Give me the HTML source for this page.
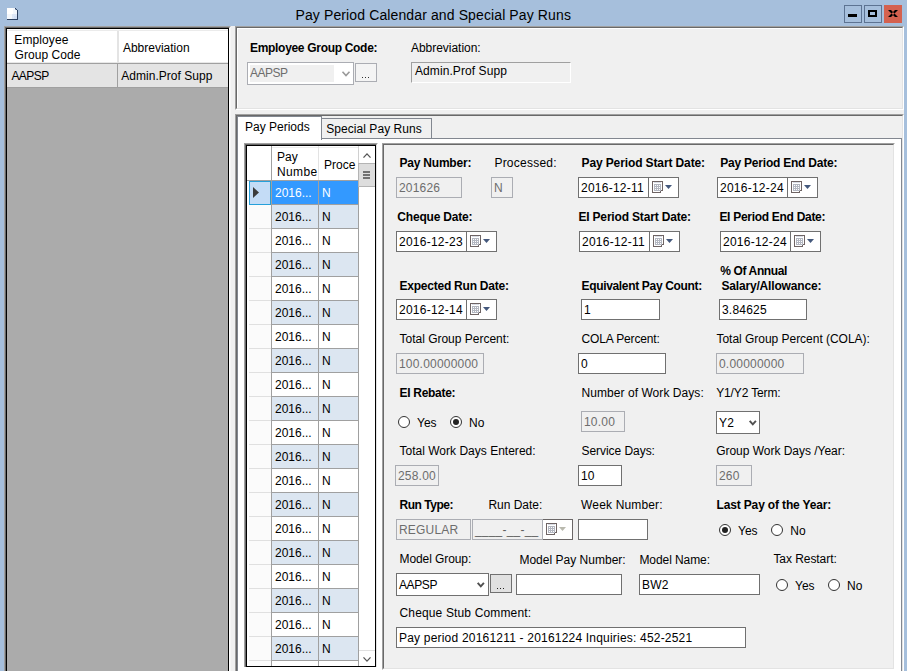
<!DOCTYPE html>
<html><head><meta charset="utf-8"><title>Pay Period Calendar and Special Pay Runs</title>
<style>
html,body{margin:0;padding:0;}
body{width:907px;height:671px;overflow:hidden;background:#a6bfdc;position:relative;font-family:"Liberation Sans",sans-serif;font-size:12px;color:#000;}
div{position:absolute;box-sizing:border-box;}
.t{white-space:nowrap;line-height:14px;}
.tb{background:#fff;border:1px solid #707070;}
.tbd{background:#f0f0f0;border:1px solid #abadb3;}
.in{left:2px;top:3px;white-space:nowrap;line-height:14px;font-size:12px;letter-spacing:0.2px;}
.dis{color:#6d6d6d;}
svg{position:absolute;overflow:visible;}
</style></head>
<body>
<div class="t" style="left:295.5px;top:6px;font-size:14px;color:#000;letter-spacing:0.117px;line-height:18px;">Pay Period Calendar and Special Pay Runs</div>
<svg style="left:7px;top:8px" width="11" height="12" viewBox="0 0 11 12" shape-rendering="crispEdges">
<rect x="0" y="0" width="10" height="11" fill="#f3f7fc"/>
<rect x="0" y="0" width="6" height="6" fill="#ffffff"/>
<rect x="5" y="6" width="5" height="5" fill="#dde7f6"/>
<rect x="7" y="8" width="3" height="3" fill="#d3e0f5"/>
<rect x="0" y="11" width="11" height="1" fill="#2c4060"/>
<rect x="10" y="2" width="1" height="10" fill="#2c4060"/>
<path d="M8 0 H10 V2 Z" fill="#a6bfdc"/>
<rect x="8" y="0" width="1" height="1" fill="#2c4060"/>
<rect x="9" y="1" width="1" height="1" fill="#2c4060"/>
<rect x="8" y="1" width="1" height="1" fill="#8fa3c0"/>
</svg>
<div class="" style="left:844px;top:5px;width:18px;height:18px;border:1px solid #5d7392;background:#a6bfdc;"><div style="left:3px;top:8px;width:9px;height:3px;background:#000"></div></div>
<div class="" style="left:864px;top:5px;width:18px;height:18px;border:1px solid #5d7392;background:#a6bfdc;"><div style="left:3px;top:4px;width:9px;height:7px;border:2px solid #000;"></div></div>
<div class="" style="left:884px;top:5px;width:18px;height:18px;background:#d4614f;"><svg style="left:4px;top:5px" width="10" height="7" viewBox="0 0 10 7"><path d="M0 0 H3 L10 7 H7 Z M10 0 H7 L0 7 H3 Z" fill="#000"/></svg></div>
<div class="" style="left:4px;top:26px;width:900px;height:645px;background:#f0f0f0;"></div>
<div class="" style="left:4px;top:26px;width:227px;height:645px;background:#ababab;border-top:1px solid #a0a0a0;border-left:1px solid #a0a0a0;border-right:1px solid #f6f6f6;"></div>
<div class="" style="left:5px;top:27px;width:225px;height:645px;border-top:1px solid #696969;border-left:1px solid #696969;border-right:1px solid #fff;"></div>
<div class="" style="left:6px;top:28px;width:223px;height:645px;border:1px solid #000;border-bottom:none;"></div>
<div class="" style="left:7px;top:29px;width:221px;height:35px;background:#fff;border-bottom:1px solid #a0a0a0;"></div>
<div class="" style="left:7px;top:62px;width:221px;height:1px;background:#e8e8e8;"></div>
<div class="" style="left:117px;top:31px;width:2px;height:32px;background:#e4e4e4;"></div>
<div class="" style="left:7px;top:30px;width:221px;height:1px;background:#ebebeb;"></div>
<div class="" style="left:7px;top:64px;width:221px;height:24px;background:#e4e4e4;border-bottom:1px solid #a0a0a0;"></div>
<div class="" style="left:117px;top:64px;width:1px;height:24px;background:#a0a0a0;"></div>
<div class="t" style="left:14.3px;top:33px;font-size:12px;color:#000;letter-spacing:0.105px;">Employee</div>
<div class="t" style="left:14.6px;top:48px;font-size:12px;color:#000;letter-spacing:0.043px;">Group Code</div>
<div class="t" style="left:122.9px;top:41px;font-size:12px;color:#000;letter-spacing:-0.001px;">Abbreviation</div>
<div class="t" style="left:11.4px;top:69px;font-size:12px;color:#000;letter-spacing:-0.544px;">AAPSP</div>
<div class="t" style="left:121.2px;top:69px;font-size:12px;color:#000;letter-spacing:0.039px;">Admin.Prof Supp</div>
<div class="" style="left:235px;top:26px;width:669px;height:84px;background:#f0f0f0;border-top:1px solid #a0a0a0;border-left:1px solid #a0a0a0;border-bottom:1px solid #fff;border-right:1px solid #fff;"></div>
<div class="" style="left:236px;top:27px;width:667px;height:82px;border-top:1px solid #696969;border-left:1px solid #696969;border-bottom:1px solid #e3e3e3;border-right:1px solid #e3e3e3;"></div>
<div class="" style="left:237px;top:28px;width:665px;height:80px;border-top:1px solid #fff;border-left:1px solid #fff;"></div>
<div class="t" style="left:250px;top:41px;font-size:12px;color:#000;font-weight:bold;letter-spacing:-0.308px;">Employee Group Code:</div>
<div class="t" style="left:411px;top:41px;font-size:12px;color:#000;letter-spacing:-0.034px;">Abbreviation:</div>
<div class="" style="left:247px;top:62px;width:107px;height:23px;background:#fff;border:1px solid #abadb3;"><div style="left:2px;top:2px;width:84px;height:17px;background:#f0f0f0"></div><div class="in dis" style="left:2px;top:3px;letter-spacing:-0.5px">AAPSP</div><svg style="left:94px;top:8px" width="8" height="6" viewBox="0 0 8 6"><path d="M0.5 0.8 L4 4.6 L7.5 0.8" stroke="#9a9a9a" stroke-width="1.6" fill="none"/></svg></div>
<div class="" style="left:355px;top:63px;width:22px;height:19px;background:#f4f4f4;border:1px solid #abadb3;"><div style="left:6px;top:13px;width:1px;height:1px;background:#333"></div><div style="left:9px;top:13px;width:1px;height:1px;background:#333"></div><div style="left:12px;top:13px;width:1px;height:1px;background:#333"></div></div>
<div class="" style="left:411px;top:62px;width:160px;height:21px;background:#f0f0f0;border-top:1px solid #a0a0a0;border-left:1px solid #a0a0a0;border-bottom:1px solid #fff;border-right:1px solid #fff;"></div>
<div class="t" style="left:415px;top:64px;font-size:12px;color:#000;letter-spacing:0.085px;">Admin.Prof Supp</div>
<div class="" style="left:235px;top:114px;width:669px;height:560px;background:#f0f0f0;border-top:1px solid #a0a0a0;border-left:1px solid #a0a0a0;border-right:1px solid #fff;"></div>
<div class="" style="left:236px;top:115px;width:667px;height:560px;border-top:1px solid #696969;border-left:1px solid #696969;border-right:1px solid #e3e3e3;"></div>
<div class="" style="left:237px;top:138px;width:665px;height:540px;background:#fff;border:1px solid #828790;"></div>
<div class="" style="left:237px;top:116px;width:85px;height:24px;background:#fff;border:1px solid #828790;border-bottom:none;"></div>
<div class="t" style="left:245px;top:120px;font-size:12px;color:#000;">Pay Periods</div>
<div class="" style="left:321px;top:118px;width:111px;height:21px;background:#f0f0f0;border:1px solid #828790;"></div>
<div class="t" style="left:326.2px;top:122px;font-size:12px;color:#000;letter-spacing:0.061px;">Special Pay Runs</div>
<div class="" style="left:244px;top:143px;width:134px;height:530px;border-top:1px solid #a0a0a0;border-left:1px solid #a0a0a0;border-right:1px solid #fff;"></div>
<div class="" style="left:245px;top:144px;width:132px;height:530px;border-top:1px solid #696969;border-left:1px solid #696969;border-right:1px solid #e3e3e3;"></div>
<div class="" style="left:246px;top:145px;width:130px;height:522px;background:#fff;border:1px solid #000;"></div>
<div class="" style="left:247px;top:146px;width:111px;height:34px;background:#fff;"></div>
<div class="" style="left:272px;top:147px;width:86px;height:1px;background:#ececec;"></div>
<div class="" style="left:271px;top:146px;width:1px;height:525px;background:#a0a0a0;"></div>
<div class="" style="left:318px;top:146px;width:1px;height:34px;background:#e3e3e3;"></div>
<div class="" style="left:318px;top:180px;width:1px;height:491px;background:#a0a0a0;"></div>
<div class="" style="left:358px;top:146px;width:1px;height:34px;background:#d0d0d0;"></div>
<div class="" style="left:247px;top:180px;width:111px;height:1px;background:#a0a0a0;"></div>
<div class="t" style="left:277px;top:150px;font-size:12px;color:#000;">Pay</div>
<div class="t" style="left:277px;top:165px;font-size:12px;color:#000;letter-spacing:0.35px;width:41px;overflow:hidden;">Numbe</div>
<div class="t" style="left:324px;top:158px;font-size:12px;color:#000;width:33px;overflow:hidden;">Proce</div>
<div class="" style="left:272px;top:181px;width:46px;height:23px;background:#3399ff;"></div>
<div class="" style="left:319px;top:181px;width:39px;height:23px;background:#3399ff;"></div>
<div class="" style="left:272px;top:204px;width:86px;height:1px;background:#a0a0a0;"></div>
<div class="" style="left:249px;top:181px;width:22px;height:23px;background:#fbfbfb;"></div>
<div class="" style="left:249px;top:204px;width:22px;height:1px;background:#e0e0e0;"></div>
<div class="t" style="left:275px;top:186px;font-size:12px;color:#fff;">2016...</div>
<div class="t" style="left:322px;top:186px;font-size:12px;color:#fff;">N</div>
<div class="" style="left:272px;top:205px;width:46px;height:23px;background:#dce6f1;"></div>
<div class="" style="left:319px;top:205px;width:39px;height:23px;background:#dce6f1;"></div>
<div class="" style="left:272px;top:228px;width:86px;height:1px;background:#a0a0a0;"></div>
<div class="" style="left:249px;top:205px;width:22px;height:23px;background:#fbfbfb;"></div>
<div class="" style="left:249px;top:228px;width:22px;height:1px;background:#e0e0e0;"></div>
<div class="t" style="left:275px;top:210px;font-size:12px;color:#000;">2016...</div>
<div class="t" style="left:322px;top:210px;font-size:12px;color:#000;">N</div>
<div class="" style="left:272px;top:229px;width:46px;height:23px;background:#fff;"></div>
<div class="" style="left:319px;top:229px;width:39px;height:23px;background:#fff;"></div>
<div class="" style="left:272px;top:252px;width:86px;height:1px;background:#a0a0a0;"></div>
<div class="" style="left:249px;top:229px;width:22px;height:23px;background:#fbfbfb;"></div>
<div class="" style="left:249px;top:252px;width:22px;height:1px;background:#e0e0e0;"></div>
<div class="t" style="left:275px;top:234px;font-size:12px;color:#000;">2016...</div>
<div class="t" style="left:322px;top:234px;font-size:12px;color:#000;">N</div>
<div class="" style="left:272px;top:253px;width:46px;height:23px;background:#dce6f1;"></div>
<div class="" style="left:319px;top:253px;width:39px;height:23px;background:#dce6f1;"></div>
<div class="" style="left:272px;top:276px;width:86px;height:1px;background:#a0a0a0;"></div>
<div class="" style="left:249px;top:253px;width:22px;height:23px;background:#fbfbfb;"></div>
<div class="" style="left:249px;top:276px;width:22px;height:1px;background:#e0e0e0;"></div>
<div class="t" style="left:275px;top:258px;font-size:12px;color:#000;">2016...</div>
<div class="t" style="left:322px;top:258px;font-size:12px;color:#000;">N</div>
<div class="" style="left:272px;top:277px;width:46px;height:23px;background:#fff;"></div>
<div class="" style="left:319px;top:277px;width:39px;height:23px;background:#fff;"></div>
<div class="" style="left:272px;top:300px;width:86px;height:1px;background:#a0a0a0;"></div>
<div class="" style="left:249px;top:277px;width:22px;height:23px;background:#fbfbfb;"></div>
<div class="" style="left:249px;top:300px;width:22px;height:1px;background:#e0e0e0;"></div>
<div class="t" style="left:275px;top:282px;font-size:12px;color:#000;">2016...</div>
<div class="t" style="left:322px;top:282px;font-size:12px;color:#000;">N</div>
<div class="" style="left:272px;top:301px;width:46px;height:23px;background:#dce6f1;"></div>
<div class="" style="left:319px;top:301px;width:39px;height:23px;background:#dce6f1;"></div>
<div class="" style="left:272px;top:324px;width:86px;height:1px;background:#a0a0a0;"></div>
<div class="" style="left:249px;top:301px;width:22px;height:23px;background:#fbfbfb;"></div>
<div class="" style="left:249px;top:324px;width:22px;height:1px;background:#e0e0e0;"></div>
<div class="t" style="left:275px;top:306px;font-size:12px;color:#000;">2016...</div>
<div class="t" style="left:322px;top:306px;font-size:12px;color:#000;">N</div>
<div class="" style="left:272px;top:325px;width:46px;height:23px;background:#fff;"></div>
<div class="" style="left:319px;top:325px;width:39px;height:23px;background:#fff;"></div>
<div class="" style="left:272px;top:348px;width:86px;height:1px;background:#a0a0a0;"></div>
<div class="" style="left:249px;top:325px;width:22px;height:23px;background:#fbfbfb;"></div>
<div class="" style="left:249px;top:348px;width:22px;height:1px;background:#e0e0e0;"></div>
<div class="t" style="left:275px;top:330px;font-size:12px;color:#000;">2016...</div>
<div class="t" style="left:322px;top:330px;font-size:12px;color:#000;">N</div>
<div class="" style="left:272px;top:349px;width:46px;height:23px;background:#dce6f1;"></div>
<div class="" style="left:319px;top:349px;width:39px;height:23px;background:#dce6f1;"></div>
<div class="" style="left:272px;top:372px;width:86px;height:1px;background:#a0a0a0;"></div>
<div class="" style="left:249px;top:349px;width:22px;height:23px;background:#fbfbfb;"></div>
<div class="" style="left:249px;top:372px;width:22px;height:1px;background:#e0e0e0;"></div>
<div class="t" style="left:275px;top:354px;font-size:12px;color:#000;">2016...</div>
<div class="t" style="left:322px;top:354px;font-size:12px;color:#000;">N</div>
<div class="" style="left:272px;top:373px;width:46px;height:23px;background:#fff;"></div>
<div class="" style="left:319px;top:373px;width:39px;height:23px;background:#fff;"></div>
<div class="" style="left:272px;top:396px;width:86px;height:1px;background:#a0a0a0;"></div>
<div class="" style="left:249px;top:373px;width:22px;height:23px;background:#fbfbfb;"></div>
<div class="" style="left:249px;top:396px;width:22px;height:1px;background:#e0e0e0;"></div>
<div class="t" style="left:275px;top:378px;font-size:12px;color:#000;">2016...</div>
<div class="t" style="left:322px;top:378px;font-size:12px;color:#000;">N</div>
<div class="" style="left:272px;top:397px;width:46px;height:23px;background:#dce6f1;"></div>
<div class="" style="left:319px;top:397px;width:39px;height:23px;background:#dce6f1;"></div>
<div class="" style="left:272px;top:420px;width:86px;height:1px;background:#a0a0a0;"></div>
<div class="" style="left:249px;top:397px;width:22px;height:23px;background:#fbfbfb;"></div>
<div class="" style="left:249px;top:420px;width:22px;height:1px;background:#e0e0e0;"></div>
<div class="t" style="left:275px;top:402px;font-size:12px;color:#000;">2016...</div>
<div class="t" style="left:322px;top:402px;font-size:12px;color:#000;">N</div>
<div class="" style="left:272px;top:421px;width:46px;height:23px;background:#fff;"></div>
<div class="" style="left:319px;top:421px;width:39px;height:23px;background:#fff;"></div>
<div class="" style="left:272px;top:444px;width:86px;height:1px;background:#a0a0a0;"></div>
<div class="" style="left:249px;top:421px;width:22px;height:23px;background:#fbfbfb;"></div>
<div class="" style="left:249px;top:444px;width:22px;height:1px;background:#e0e0e0;"></div>
<div class="t" style="left:275px;top:426px;font-size:12px;color:#000;">2016...</div>
<div class="t" style="left:322px;top:426px;font-size:12px;color:#000;">N</div>
<div class="" style="left:272px;top:445px;width:46px;height:23px;background:#dce6f1;"></div>
<div class="" style="left:319px;top:445px;width:39px;height:23px;background:#dce6f1;"></div>
<div class="" style="left:272px;top:468px;width:86px;height:1px;background:#a0a0a0;"></div>
<div class="" style="left:249px;top:445px;width:22px;height:23px;background:#fbfbfb;"></div>
<div class="" style="left:249px;top:468px;width:22px;height:1px;background:#e0e0e0;"></div>
<div class="t" style="left:275px;top:450px;font-size:12px;color:#000;">2016...</div>
<div class="t" style="left:322px;top:450px;font-size:12px;color:#000;">N</div>
<div class="" style="left:272px;top:469px;width:46px;height:23px;background:#fff;"></div>
<div class="" style="left:319px;top:469px;width:39px;height:23px;background:#fff;"></div>
<div class="" style="left:272px;top:492px;width:86px;height:1px;background:#a0a0a0;"></div>
<div class="" style="left:249px;top:469px;width:22px;height:23px;background:#fbfbfb;"></div>
<div class="" style="left:249px;top:492px;width:22px;height:1px;background:#e0e0e0;"></div>
<div class="t" style="left:275px;top:474px;font-size:12px;color:#000;">2016...</div>
<div class="t" style="left:322px;top:474px;font-size:12px;color:#000;">N</div>
<div class="" style="left:272px;top:493px;width:46px;height:23px;background:#dce6f1;"></div>
<div class="" style="left:319px;top:493px;width:39px;height:23px;background:#dce6f1;"></div>
<div class="" style="left:272px;top:516px;width:86px;height:1px;background:#a0a0a0;"></div>
<div class="" style="left:249px;top:493px;width:22px;height:23px;background:#fbfbfb;"></div>
<div class="" style="left:249px;top:516px;width:22px;height:1px;background:#e0e0e0;"></div>
<div class="t" style="left:275px;top:498px;font-size:12px;color:#000;">2016...</div>
<div class="t" style="left:322px;top:498px;font-size:12px;color:#000;">N</div>
<div class="" style="left:272px;top:517px;width:46px;height:23px;background:#fff;"></div>
<div class="" style="left:319px;top:517px;width:39px;height:23px;background:#fff;"></div>
<div class="" style="left:272px;top:540px;width:86px;height:1px;background:#a0a0a0;"></div>
<div class="" style="left:249px;top:517px;width:22px;height:23px;background:#fbfbfb;"></div>
<div class="" style="left:249px;top:540px;width:22px;height:1px;background:#e0e0e0;"></div>
<div class="t" style="left:275px;top:522px;font-size:12px;color:#000;">2016...</div>
<div class="t" style="left:322px;top:522px;font-size:12px;color:#000;">N</div>
<div class="" style="left:272px;top:541px;width:46px;height:23px;background:#dce6f1;"></div>
<div class="" style="left:319px;top:541px;width:39px;height:23px;background:#dce6f1;"></div>
<div class="" style="left:272px;top:564px;width:86px;height:1px;background:#a0a0a0;"></div>
<div class="" style="left:249px;top:541px;width:22px;height:23px;background:#fbfbfb;"></div>
<div class="" style="left:249px;top:564px;width:22px;height:1px;background:#e0e0e0;"></div>
<div class="t" style="left:275px;top:546px;font-size:12px;color:#000;">2016...</div>
<div class="t" style="left:322px;top:546px;font-size:12px;color:#000;">N</div>
<div class="" style="left:272px;top:565px;width:46px;height:23px;background:#fff;"></div>
<div class="" style="left:319px;top:565px;width:39px;height:23px;background:#fff;"></div>
<div class="" style="left:272px;top:588px;width:86px;height:1px;background:#a0a0a0;"></div>
<div class="" style="left:249px;top:565px;width:22px;height:23px;background:#fbfbfb;"></div>
<div class="" style="left:249px;top:588px;width:22px;height:1px;background:#e0e0e0;"></div>
<div class="t" style="left:275px;top:570px;font-size:12px;color:#000;">2016...</div>
<div class="t" style="left:322px;top:570px;font-size:12px;color:#000;">N</div>
<div class="" style="left:272px;top:589px;width:46px;height:23px;background:#dce6f1;"></div>
<div class="" style="left:319px;top:589px;width:39px;height:23px;background:#dce6f1;"></div>
<div class="" style="left:272px;top:612px;width:86px;height:1px;background:#a0a0a0;"></div>
<div class="" style="left:249px;top:589px;width:22px;height:23px;background:#fbfbfb;"></div>
<div class="" style="left:249px;top:612px;width:22px;height:1px;background:#e0e0e0;"></div>
<div class="t" style="left:275px;top:594px;font-size:12px;color:#000;">2016...</div>
<div class="t" style="left:322px;top:594px;font-size:12px;color:#000;">N</div>
<div class="" style="left:272px;top:613px;width:46px;height:23px;background:#fff;"></div>
<div class="" style="left:319px;top:613px;width:39px;height:23px;background:#fff;"></div>
<div class="" style="left:272px;top:636px;width:86px;height:1px;background:#a0a0a0;"></div>
<div class="" style="left:249px;top:613px;width:22px;height:23px;background:#fbfbfb;"></div>
<div class="" style="left:249px;top:636px;width:22px;height:1px;background:#e0e0e0;"></div>
<div class="t" style="left:275px;top:618px;font-size:12px;color:#000;">2016...</div>
<div class="t" style="left:322px;top:618px;font-size:12px;color:#000;">N</div>
<div class="" style="left:272px;top:637px;width:46px;height:23px;background:#dce6f1;"></div>
<div class="" style="left:319px;top:637px;width:39px;height:23px;background:#dce6f1;"></div>
<div class="" style="left:272px;top:660px;width:86px;height:1px;background:#a0a0a0;"></div>
<div class="" style="left:249px;top:637px;width:22px;height:23px;background:#fbfbfb;"></div>
<div class="" style="left:249px;top:660px;width:22px;height:1px;background:#e0e0e0;"></div>
<div class="t" style="left:275px;top:642px;font-size:12px;color:#000;">2016...</div>
<div class="t" style="left:322px;top:642px;font-size:12px;color:#000;">N</div>
<div class="" style="left:272px;top:661px;width:46px;height:23px;background:#fff;"></div>
<div class="" style="left:319px;top:661px;width:39px;height:23px;background:#fff;"></div>
<div class="" style="left:272px;top:684px;width:86px;height:1px;background:#a0a0a0;"></div>
<div class="" style="left:249px;top:661px;width:22px;height:23px;background:#fbfbfb;"></div>
<div class="" style="left:249px;top:684px;width:22px;height:1px;background:#e0e0e0;"></div>
<div class="t" style="left:275px;top:666px;font-size:12px;color:#000;">2016...</div>
<div class="t" style="left:322px;top:666px;font-size:12px;color:#000;">N</div>
<div class="" style="left:358px;top:187px;width:1px;height:480px;background:#a0a0a0;"></div>
<div class="" style="left:249px;top:181px;width:22px;height:24px;background:#c4dcf6;border:1px solid #26a0da;"></div>
<svg style="left:253px;top:187px" width="6" height="11" viewBox="0 0 6 11"><path d="M0 0 L6 5.5 L0 11 Z" fill="#3c3c3c"/></svg>
<div class="" style="left:359px;top:146px;width:16px;height:520px;background:#fff;"></div>
<svg style="left:363px;top:153px" width="8" height="5" viewBox="0 0 8 5"><path d="M0.5 4.6 L4 0.9 L7.5 4.6" stroke="#555" stroke-width="1.3" fill="none"/></svg>
<div class="" style="left:358px;top:163px;width:17px;height:24px;background:#dddddd;border:1px solid #b4b4b4;border-right:none;"><div style="left:4px;top:7px;width:7px;height:2px;background:#707070"></div><div style="left:4px;top:10px;width:7px;height:2px;background:#707070"></div><div style="left:4px;top:13px;width:7px;height:2px;background:#707070"></div></div>
<div class="" style="left:359px;top:650px;width:16px;height:16px;background:#fff;border-top:1px solid #e0e0e0;"></div>
<svg style="left:363px;top:657px" width="8" height="5" viewBox="0 0 8 5"><path d="M0.5 0.4 L4 4.1 L7.5 0.4" stroke="#555" stroke-width="1.3" fill="none"/></svg>
<div class="" style="left:246px;top:666px;width:130px;height:1px;background:#000;"></div>
<div class="" style="left:244px;top:667px;width:134px;height:4px;background:#fff;"></div>
<div class="" style="left:382px;top:143px;width:513px;height:527px;background:#f0f0f0;border-top:1px solid #a0a0a0;border-left:1px solid #a0a0a0;border-right:1px solid #fff;border-bottom:1px solid #fff;"></div>
<div class="" style="left:383px;top:144px;width:511px;height:525px;border-top:1px solid #696969;border-left:1px solid #696969;border-right:1px solid #e3e3e3;border-bottom:1px solid #e3e3e3;"></div>
<div class="t" style="left:399.5px;top:156px;font-size:12px;color:#000;font-weight:bold;letter-spacing:-0.211px;">Pay Number:</div>
<div class="t" style="left:494.4px;top:156px;font-size:12px;color:#000;letter-spacing:0.237px;">Processed:</div>
<div class="t" style="left:581.5px;top:156px;font-size:12px;color:#000;font-weight:bold;letter-spacing:-0.116px;">Pay Period Start Date:</div>
<div class="t" style="left:720.3px;top:156px;font-size:12px;color:#000;font-weight:bold;letter-spacing:-0.223px;">Pay Period End Date:</div>
<div class="tbd" style="left:396px;top:177px;width:66px;height:21px;"><div class="in dis">201626</div></div>
<div class="tbd" style="left:491px;top:177px;width:22px;height:21px;"><div class="in dis">N</div></div>
<div class="tb" style="left:578px;top:177px;width:101px;height:21px;"><div class="in" style="left:2px;letter-spacing:0.25px">2016-12-11</div></div>
<div class="" style="left:648px;top:177px;width:1px;height:21px;background:#707070;"></div>
<svg style="left:652px;top:181px" width="11" height="12" viewBox="0 0 11 12" shape-rendering="crispEdges">
<path d="M0.5 0.5 H10.5 V9.5 H8.5 V11.5 H0.5 Z" fill="#fff" stroke="#6e6464" stroke-width="1"/>
<rect x="2" y="1" width="7" height="1" fill="#d9dde6"/>
<rect x="2" y="3" width="7" height="7" fill="#b3b7c1"/>
<path d="M3 4h1v1h-1z M5 4h1v1h-1z M7 4h1v1h-1z M3 6h1v1h-1z M5 6h1v1h-1z M7 6h1v1h-1z M3 8h1v1h-1z M5 8h1v1h-1z M7 8h1v1h-1z" fill="#fff"/>
</svg>
<svg style="left:665px;top:185px" width="7" height="4" viewBox="0 0 7 4"><path d="M0 0 H7 L3.5 4 Z" fill="#44587c"/></svg>
<div class="tb" style="left:717px;top:177px;width:101px;height:21px;"><div class="in" style="left:2px;letter-spacing:0.25px">2016-12-24</div></div>
<div class="" style="left:787px;top:177px;width:1px;height:21px;background:#707070;"></div>
<svg style="left:791px;top:181px" width="11" height="12" viewBox="0 0 11 12" shape-rendering="crispEdges">
<path d="M0.5 0.5 H10.5 V9.5 H8.5 V11.5 H0.5 Z" fill="#fff" stroke="#6e6464" stroke-width="1"/>
<rect x="2" y="1" width="7" height="1" fill="#d9dde6"/>
<rect x="2" y="3" width="7" height="7" fill="#b3b7c1"/>
<path d="M3 4h1v1h-1z M5 4h1v1h-1z M7 4h1v1h-1z M3 6h1v1h-1z M5 6h1v1h-1z M7 6h1v1h-1z M3 8h1v1h-1z M5 8h1v1h-1z M7 8h1v1h-1z" fill="#fff"/>
</svg>
<svg style="left:804px;top:185px" width="7" height="4" viewBox="0 0 7 4"><path d="M0 0 H7 L3.5 4 Z" fill="#44587c"/></svg>
<div class="t" style="left:397.3px;top:210px;font-size:12px;color:#000;font-weight:bold;letter-spacing:-0.196px;">Cheque Date:</div>
<div class="t" style="left:578.4px;top:210px;font-size:12px;color:#000;font-weight:bold;letter-spacing:-0.173px;">EI Period Start Date:</div>
<div class="t" style="left:719.4px;top:210px;font-size:12px;color:#000;font-weight:bold;letter-spacing:-0.292px;">EI Period End Date:</div>
<div class="tb" style="left:396px;top:231px;width:101px;height:21px;"><div class="in" style="left:2px;letter-spacing:0.25px">2016-12-23</div></div>
<div class="" style="left:466px;top:231px;width:1px;height:21px;background:#707070;"></div>
<svg style="left:470px;top:235px" width="11" height="12" viewBox="0 0 11 12" shape-rendering="crispEdges">
<path d="M0.5 0.5 H10.5 V9.5 H8.5 V11.5 H0.5 Z" fill="#fff" stroke="#6e6464" stroke-width="1"/>
<rect x="2" y="1" width="7" height="1" fill="#d9dde6"/>
<rect x="2" y="3" width="7" height="7" fill="#b3b7c1"/>
<path d="M3 4h1v1h-1z M5 4h1v1h-1z M7 4h1v1h-1z M3 6h1v1h-1z M5 6h1v1h-1z M7 6h1v1h-1z M3 8h1v1h-1z M5 8h1v1h-1z M7 8h1v1h-1z" fill="#fff"/>
</svg>
<svg style="left:483px;top:239px" width="7" height="4" viewBox="0 0 7 4"><path d="M0 0 H7 L3.5 4 Z" fill="#44587c"/></svg>
<div class="tb" style="left:579px;top:231px;width:101px;height:21px;"><div class="in" style="left:2px;letter-spacing:0.25px">2016-12-11</div></div>
<div class="" style="left:649px;top:231px;width:1px;height:21px;background:#707070;"></div>
<svg style="left:653px;top:235px" width="11" height="12" viewBox="0 0 11 12" shape-rendering="crispEdges">
<path d="M0.5 0.5 H10.5 V9.5 H8.5 V11.5 H0.5 Z" fill="#fff" stroke="#6e6464" stroke-width="1"/>
<rect x="2" y="1" width="7" height="1" fill="#d9dde6"/>
<rect x="2" y="3" width="7" height="7" fill="#b3b7c1"/>
<path d="M3 4h1v1h-1z M5 4h1v1h-1z M7 4h1v1h-1z M3 6h1v1h-1z M5 6h1v1h-1z M7 6h1v1h-1z M3 8h1v1h-1z M5 8h1v1h-1z M7 8h1v1h-1z" fill="#fff"/>
</svg>
<svg style="left:666px;top:239px" width="7" height="4" viewBox="0 0 7 4"><path d="M0 0 H7 L3.5 4 Z" fill="#44587c"/></svg>
<div class="tb" style="left:720px;top:231px;width:101px;height:21px;"><div class="in" style="left:2px;letter-spacing:0.25px">2016-12-24</div></div>
<div class="" style="left:790px;top:231px;width:1px;height:21px;background:#707070;"></div>
<svg style="left:794px;top:235px" width="11" height="12" viewBox="0 0 11 12" shape-rendering="crispEdges">
<path d="M0.5 0.5 H10.5 V9.5 H8.5 V11.5 H0.5 Z" fill="#fff" stroke="#6e6464" stroke-width="1"/>
<rect x="2" y="1" width="7" height="1" fill="#d9dde6"/>
<rect x="2" y="3" width="7" height="7" fill="#b3b7c1"/>
<path d="M3 4h1v1h-1z M5 4h1v1h-1z M7 4h1v1h-1z M3 6h1v1h-1z M5 6h1v1h-1z M7 6h1v1h-1z M3 8h1v1h-1z M5 8h1v1h-1z M7 8h1v1h-1z" fill="#fff"/>
</svg>
<svg style="left:807px;top:239px" width="7" height="4" viewBox="0 0 7 4"><path d="M0 0 H7 L3.5 4 Z" fill="#44587c"/></svg>
<div class="t" style="left:399.5px;top:279px;font-size:12px;color:#000;font-weight:bold;letter-spacing:-0.231px;">Expected Run Date:</div>
<div class="t" style="left:581.5px;top:279px;font-size:12px;color:#000;font-weight:bold;letter-spacing:-0.331px;">Equivalent Pay Count:</div>
<div class="t" style="left:720.3px;top:264px;font-size:12px;color:#000;font-weight:bold;letter-spacing:-0.381px;">% Of Annual</div>
<div class="t" style="left:721.4px;top:279px;font-size:12px;color:#000;font-weight:bold;letter-spacing:-0.165px;">Salary/Allowance:</div>
<div class="tb" style="left:396px;top:299px;width:101px;height:21px;"><div class="in" style="left:2px;letter-spacing:0.25px">2016-12-14</div></div>
<div class="" style="left:466px;top:299px;width:1px;height:21px;background:#707070;"></div>
<svg style="left:470px;top:303px" width="11" height="12" viewBox="0 0 11 12" shape-rendering="crispEdges">
<path d="M0.5 0.5 H10.5 V9.5 H8.5 V11.5 H0.5 Z" fill="#fff" stroke="#6e6464" stroke-width="1"/>
<rect x="2" y="1" width="7" height="1" fill="#d9dde6"/>
<rect x="2" y="3" width="7" height="7" fill="#b3b7c1"/>
<path d="M3 4h1v1h-1z M5 4h1v1h-1z M7 4h1v1h-1z M3 6h1v1h-1z M5 6h1v1h-1z M7 6h1v1h-1z M3 8h1v1h-1z M5 8h1v1h-1z M7 8h1v1h-1z" fill="#fff"/>
</svg>
<svg style="left:483px;top:307px" width="7" height="4" viewBox="0 0 7 4"><path d="M0 0 H7 L3.5 4 Z" fill="#44587c"/></svg>
<div class="tb" style="left:581px;top:299px;width:79px;height:21px;"><div class="in">1</div></div>
<div class="tb" style="left:719px;top:299px;width:88px;height:21px;"><div class="in">3.84625</div></div>
<div class="t" style="left:399.5px;top:332px;font-size:12px;color:#000;letter-spacing:-0.008px;">Total Group Percent:</div>
<div class="t" style="left:581.5px;top:332px;font-size:12px;color:#000;letter-spacing:-0.142px;">COLA Percent:</div>
<div class="t" style="left:716.5px;top:332px;font-size:12px;color:#000;letter-spacing:-0.028px;">Total Group Percent (COLA):</div>
<div class="tbd" style="left:396px;top:353px;width:88px;height:21px;"><div class="in dis">100.00000000</div></div>
<div class="tb" style="left:578px;top:353px;width:88px;height:21px;"><div class="in">0</div></div>
<div class="tbd" style="left:716px;top:353px;width:88px;height:21px;"><div class="in dis">0.00000000</div></div>
<div class="t" style="left:399.5px;top:386px;font-size:12px;color:#000;font-weight:bold;letter-spacing:-0.288px;">EI Rebate:</div>
<div class="t" style="left:581.5px;top:386px;font-size:12px;color:#000;letter-spacing:0.058px;">Number of Work Days:</div>
<div class="t" style="left:716.2px;top:386px;font-size:12px;color:#000;letter-spacing:-0.137px;">Y1/Y2 Term:</div>
<div class="" style="left:398px;top:416px;width:12px;height:12px;border:1px solid #333;border-radius:50%;background:#fff;"></div>
<div class="t" style="left:417px;top:416px;font-size:12px;color:#000;">Yes</div>
<div class="" style="left:450px;top:416px;width:12px;height:12px;border:1px solid #333;border-radius:50%;background:#fff;"><div style="left:2px;top:2px;width:6px;height:6px;border-radius:50%;background:#222"></div></div>
<div class="t" style="left:469px;top:416px;font-size:12px;color:#000;">No</div>
<div class="tbd" style="left:581px;top:411px;width:44px;height:21px;"><div class="in dis">10.00</div></div>
<div class="tb" style="left:716px;top:411px;width:44px;height:23px;"><div class="in" style="top:4px">Y2</div><svg style="left:32px;top:8px" width="8" height="6" viewBox="0 0 8 6"><path d="M0.7 0.8 L3.8 4.4 L6.9 0.8" stroke="#505050" stroke-width="1.9" fill="none"/></svg></div>
<div class="t" style="left:399.5px;top:444px;font-size:12px;color:#000;letter-spacing:0.011px;">Total Work Days Entered:</div>
<div class="t" style="left:581.5px;top:444px;font-size:12px;color:#000;letter-spacing:-0.048px;">Service Days:</div>
<div class="t" style="left:716.2px;top:444px;font-size:12px;color:#000;letter-spacing:-0.027px;">Group Work Days /Year:</div>
<div class="tbd" style="left:395px;top:465px;width:44px;height:21px;"><div class="in dis">258.00</div></div>
<div class="tb" style="left:578px;top:465px;width:44px;height:21px;"><div class="in">10</div></div>
<div class="tbd" style="left:716px;top:465px;width:36px;height:21px;"><div class="in dis">260</div></div>
<div class="t" style="left:399.5px;top:498px;font-size:12px;color:#000;font-weight:bold;letter-spacing:-0.464px;">Run Type:</div>
<div class="t" style="left:488.4px;top:498px;font-size:12px;color:#000;letter-spacing:-0.026px;">Run Date:</div>
<div class="t" style="left:581.1px;top:498px;font-size:12px;color:#000;letter-spacing:0.149px;">Week Number:</div>
<div class="t" style="left:716.5px;top:498px;font-size:12px;color:#000;font-weight:bold;letter-spacing:-0.149px;">Last Pay of the Year:</div>
<div class="tbd" style="left:396px;top:519px;width:75px;height:21px;"><div class="in dis">REGULAR</div></div>
<div class="" style="left:472px;top:519px;width:71px;height:21px;background:#f0f0f0;border:1px solid #abadb3;"><div class="in dis" style="left:2px;color:#5f5f5f">____-__-__</div></div>
<div class="" style="left:543px;top:519px;width:30px;height:21px;background:#fff;border:1px solid #6a6666;border-left:none;"></div>
<svg style="left:546px;top:523px" width="11" height="12" viewBox="0 0 11 12" shape-rendering="crispEdges">
<path d="M0.5 0.5 H10.5 V9.5 H8.5 V11.5 H0.5 Z" fill="#fff" stroke="#6e6464" stroke-width="1"/>
<rect x="2" y="1" width="7" height="1" fill="#d9dde6"/>
<rect x="2" y="3" width="7" height="7" fill="#b3b7c1"/>
<path d="M3 4h1v1h-1z M5 4h1v1h-1z M7 4h1v1h-1z M3 6h1v1h-1z M5 6h1v1h-1z M7 6h1v1h-1z M3 8h1v1h-1z M5 8h1v1h-1z M7 8h1v1h-1z" fill="#fff"/>
</svg>
<svg style="left:559px;top:527px" width="7" height="4" viewBox="0 0 7 4"><path d="M0 0 H7 L3.5 4 Z" fill="#b9b9ae"/></svg>
<div class="tb" style="left:578px;top:519px;width:70px;height:21px;"><div class="in"></div></div>
<div class="" style="left:719px;top:524px;width:12px;height:12px;border:1px solid #333;border-radius:50%;background:#fff;"><div style="left:2px;top:2px;width:6px;height:6px;border-radius:50%;background:#222"></div></div>
<div class="t" style="left:738px;top:524px;font-size:12px;color:#000;">Yes</div>
<div class="" style="left:771px;top:524px;width:12px;height:12px;border:1px solid #333;border-radius:50%;background:#fff;"></div>
<div class="t" style="left:790.3px;top:524px;font-size:12px;color:#000;">No</div>
<div class="t" style="left:399.5px;top:552px;font-size:12px;color:#000;letter-spacing:-0.084px;">Model Group:</div>
<div class="t" style="left:519.4px;top:553px;font-size:12px;color:#000;letter-spacing:0.015px;">Model Pay Number:</div>
<div class="t" style="left:639.4px;top:553px;font-size:12px;color:#000;letter-spacing:-0.069px;">Model Name:</div>
<div class="t" style="left:773.4px;top:552px;font-size:12px;color:#000;letter-spacing:-0.06px;">Tax Restart:</div>
<div class="tb" style="left:396px;top:573px;width:93px;height:23px;"><div class="in" style="top:4px;letter-spacing:-0.4px">AAPSP</div><svg style="left:80px;top:8px" width="8" height="6" viewBox="0 0 8 6"><path d="M0.7 0.8 L3.8 4.4 L6.9 0.8" stroke="#505050" stroke-width="1.9" fill="none"/></svg></div>
<div class="" style="left:490px;top:574px;width:22px;height:19px;background:#e1e1e1;border:1px solid #707070;"><div style="left:6px;top:13px;width:1px;height:1px;background:#222"></div><div style="left:9px;top:13px;width:1px;height:1px;background:#222"></div><div style="left:12px;top:13px;width:1px;height:1px;background:#222"></div></div>
<div class="tb" style="left:516px;top:574px;width:106px;height:21px;"><div class="in"></div></div>
<div class="tb" style="left:639px;top:574px;width:121px;height:21px;"><div class="in">BW2</div></div>
<div class="" style="left:776px;top:579px;width:12px;height:12px;border:1px solid #333;border-radius:50%;background:#fff;"></div>
<div class="t" style="left:795px;top:579px;font-size:12px;color:#000;">Yes</div>
<div class="" style="left:828px;top:579px;width:12px;height:12px;border:1px solid #333;border-radius:50%;background:#fff;"></div>
<div class="t" style="left:847px;top:579px;font-size:12px;color:#000;">No</div>
<div class="t" style="left:399.5px;top:606px;font-size:12px;color:#000;letter-spacing:0.148px;">Cheque Stub Comment:</div>
<div class="tb" style="left:396px;top:627px;width:350px;height:21px;"><div class="in">Pay period 20161211 - 20161224 Inquiries: 452-2521</div></div>
<div class="" style="left:904px;top:0px;width:3px;height:671px;background:#a6bfdc;"></div>
<div class="" style="left:0px;top:0px;width:4px;height:671px;background:#a6bfdc;"></div>
</body></html>
